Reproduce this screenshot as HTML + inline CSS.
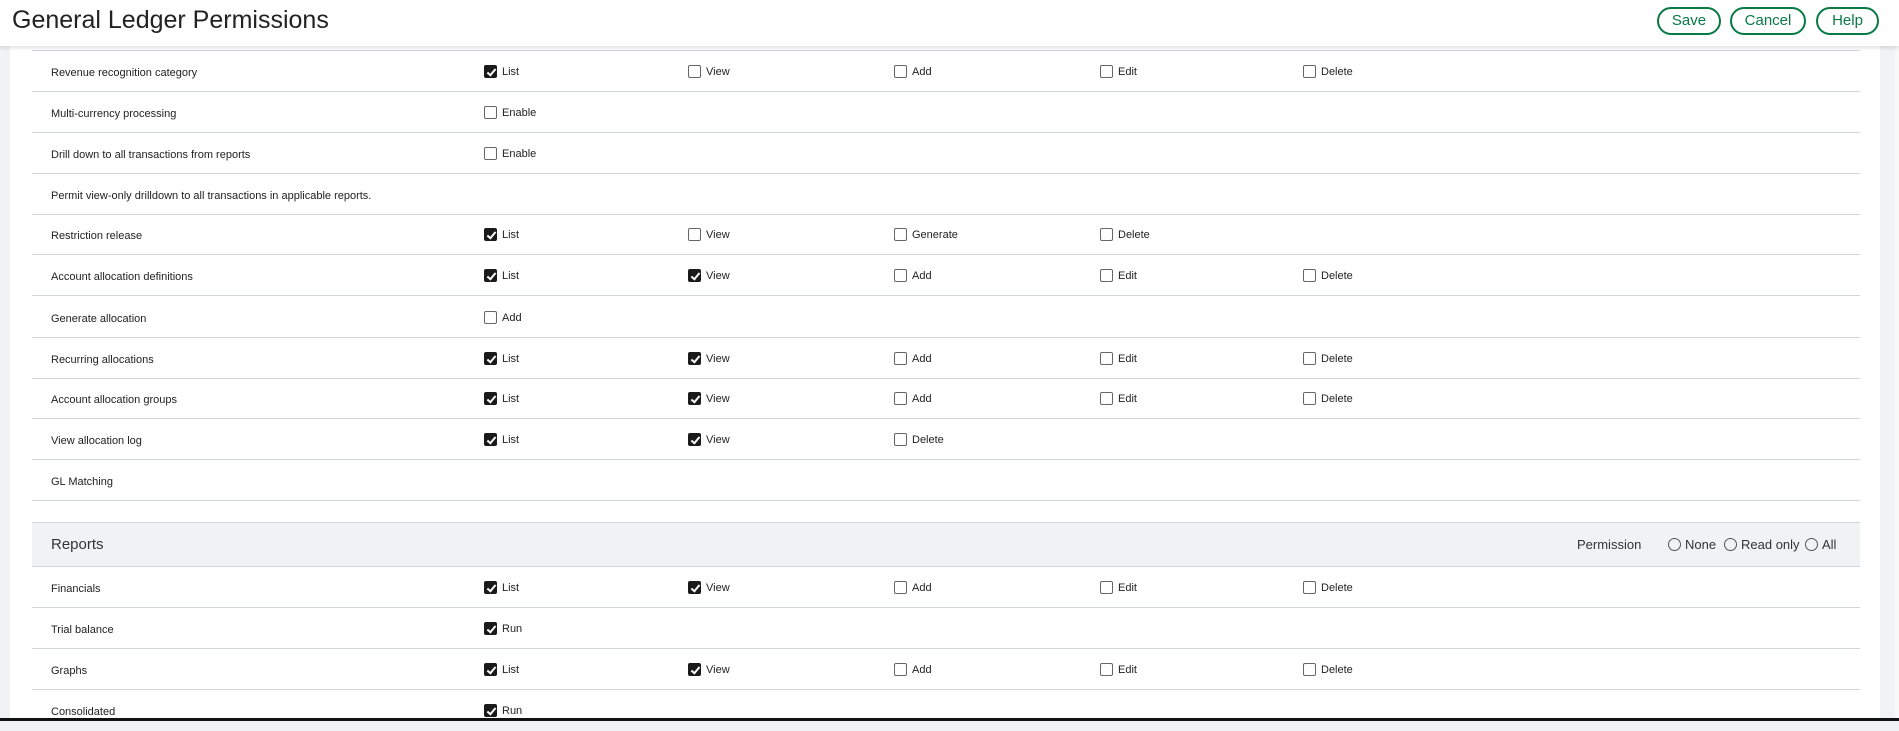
<!DOCTYPE html>
<html><head><style>
*{box-sizing:border-box;margin:0;padding:0}
body{width:1899px;height:721px;overflow:hidden;background:#f0f2f3;font-family:"Liberation Sans",Arial,sans-serif;color:#222;position:relative}
.hdr{position:absolute;left:0;top:0;width:1899px;height:46px;background:#fff;box-shadow:0 2px 4px rgba(0,0,0,.12);z-index:2}
.hdr h1{position:absolute;left:12px;top:6px;font-size:25px;font-weight:normal;color:#222}
.btn{position:absolute;top:7px;height:28px;border:2px solid #0a7a45;border-radius:14px;color:#0a7a45;font-size:15px;line-height:24px;text-align:center;background:#fff}
.main{position:absolute;left:10px;top:45px;width:1870px;height:673px;background:#fff}
.row{position:absolute;left:22px;width:1828px;height:41px;border-bottom:1px solid #cfd6db;font-size:11px}
.row .l{position:absolute;left:19px;top:16px}
.cb{position:absolute;top:14px;height:14px;line-height:14px;white-space:nowrap}
.cb i{display:inline-block;width:13px;height:13px;border:1px solid #666;border-radius:2px;vertical-align:top;margin-right:5px;background:#fff;position:relative}
.cb i.c{background:#1a1a1a;border-color:#1a1a1a}
.cb i.c:after{content:"";position:absolute;left:3.5px;top:0.5px;width:3px;height:7px;border:solid #fff;border-width:0 2px 2px 0;transform:rotate(40deg)}
.sec{position:absolute;left:22px;top:477px;width:1828px;height:45px;background:#f0f3f4;border-top:1px solid #cfd6db;border-bottom:1px solid #cfd6db}
.sec .t{position:absolute;left:19px;top:13px;font-size:15px;color:#333}
.r{position:absolute;top:14px;font-size:13px;color:#333}
.r i{display:inline-block;width:13px;height:13px;border:1px solid #555;border-radius:50%;vertical-align:-2px;margin-right:4px}
</style></head><body>
<div class="hdr"><h1>General Ledger Permissions</h1>
<div class="btn" style="left:1657px;width:64px">Save</div>
<div class="btn" style="left:1730px;width:76px">Cancel</div>
<div class="btn" style="left:1816px;width:63px">Help</div>
</div>
<div class="main">
<div class="row" style="top:-35px;height:41px"></div>
<div class="row" style="top:6px"><span class="l">Revenue recognition category</span><span class="cb" style="left:452px"><i class="c"></i>List</span><span class="cb" style="left:656px"><i></i>View</span><span class="cb" style="left:862px"><i></i>Add</span><span class="cb" style="left:1068px"><i></i>Edit</span><span class="cb" style="left:1271px"><i></i>Delete</span></div>
<div class="row" style="top:47px"><span class="l">Multi-currency processing</span><span class="cb" style="left:452px"><i></i>Enable</span></div>
<div class="row" style="top:88px"><span class="l">Drill down to all transactions from reports</span><span class="cb" style="left:452px"><i></i>Enable</span></div>
<div class="row" style="top:129px"><span class="l">Permit view-only drilldown to all transactions in applicable reports.</span></div>
<div class="row" style="top:169px"><span class="l">Restriction release</span><span class="cb" style="left:452px"><i class="c"></i>List</span><span class="cb" style="left:656px"><i></i>View</span><span class="cb" style="left:862px"><i></i>Generate</span><span class="cb" style="left:1068px"><i></i>Delete</span></div>
<div class="row" style="top:210px"><span class="l">Account allocation definitions</span><span class="cb" style="left:452px"><i class="c"></i>List</span><span class="cb" style="left:656px"><i class="c"></i>View</span><span class="cb" style="left:862px"><i></i>Add</span><span class="cb" style="left:1068px"><i></i>Edit</span><span class="cb" style="left:1271px"><i></i>Delete</span></div>
<div class="row" style="top:252px"><span class="l">Generate allocation</span><span class="cb" style="left:452px"><i></i>Add</span></div>
<div class="row" style="top:293px"><span class="l">Recurring allocations</span><span class="cb" style="left:452px"><i class="c"></i>List</span><span class="cb" style="left:656px"><i class="c"></i>View</span><span class="cb" style="left:862px"><i></i>Add</span><span class="cb" style="left:1068px"><i></i>Edit</span><span class="cb" style="left:1271px"><i></i>Delete</span></div>
<div class="row" style="top:333px"><span class="l">Account allocation groups</span><span class="cb" style="left:452px"><i class="c"></i>List</span><span class="cb" style="left:656px"><i class="c"></i>View</span><span class="cb" style="left:862px"><i></i>Add</span><span class="cb" style="left:1068px"><i></i>Edit</span><span class="cb" style="left:1271px"><i></i>Delete</span></div>
<div class="row" style="top:374px"><span class="l">View allocation log</span><span class="cb" style="left:452px"><i class="c"></i>List</span><span class="cb" style="left:656px"><i class="c"></i>View</span><span class="cb" style="left:862px"><i></i>Delete</span></div>
<div class="row" style="top:415px"><span class="l">GL Matching</span></div>
<div class="sec"><span class="t">Reports</span>
<span class="r" style="left:1545px">Permission</span>
<span class="r" style="left:1636px"><i></i>None</span>
<span class="r" style="left:1692px"><i></i>Read only</span>
<span class="r" style="left:1773px"><i></i>All</span></div>
<div class="row" style="top:522px"><span class="l">Financials</span><span class="cb" style="left:452px"><i class="c"></i>List</span><span class="cb" style="left:656px"><i class="c"></i>View</span><span class="cb" style="left:862px"><i></i>Add</span><span class="cb" style="left:1068px"><i></i>Edit</span><span class="cb" style="left:1271px"><i></i>Delete</span></div>
<div class="row" style="top:563px"><span class="l">Trial balance</span><span class="cb" style="left:452px"><i class="c"></i>Run</span></div>
<div class="row" style="top:604px"><span class="l">Graphs</span><span class="cb" style="left:452px"><i class="c"></i>List</span><span class="cb" style="left:656px"><i class="c"></i>View</span><span class="cb" style="left:862px"><i></i>Add</span><span class="cb" style="left:1068px"><i></i>Edit</span><span class="cb" style="left:1271px"><i></i>Delete</span></div>
<div class="row" style="top:645px;border:none"><span class="l">Consolidated</span><span class="cb" style="left:452px"><i class="c"></i>Run</span></div>
</div>
<div style="position:absolute;left:1895px;top:0;width:4px;height:718px;background:#f8f8f8"></div>
<div style="position:absolute;left:0;top:718px;width:1899px;height:3px;background:#111"></div>
</body></html>
